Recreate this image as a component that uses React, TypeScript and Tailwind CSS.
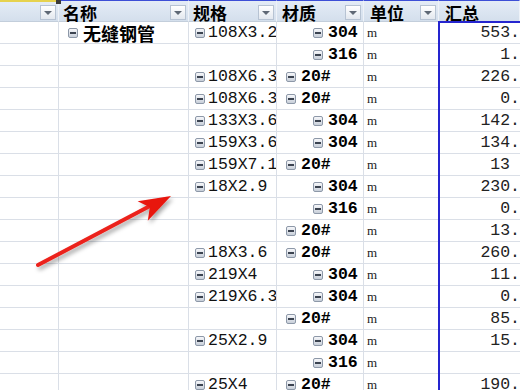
const COLS = ['w-[59px]', 'w-[130px]', 'w-[88px]', 'w-[87px]', 'w-[75px]', 'w-[81px]'];

type Row = {
  name?: string;
  spec?: string;
  mat?: string;
  sub?: boolean;
  total?: string;
  pr?: string;
};

const rows: Row[] = [
  { name: '无缝钢管', spec: '108X3.2', mat: '304', sub: true, total: '553.' },
  { mat: '316', sub: true, total: '1.' },
  { spec: '108X6.3', mat: '20#', total: '226.' },
  { spec: '108X6.3', mat: '20#', total: '0.' },
  { spec: '133X3.6', mat: '304', sub: true, total: '142.' },
  { spec: '159X3.6', mat: '304', sub: true, total: '134.' },
  { spec: '159X7.1', mat: '20#', total: '13', pr: 'pr-[10px]' },
  { spec: '18X2.9', mat: '304', sub: true, total: '230.' },
  { mat: '316', sub: true, total: '0.' },
  { mat: '20#', total: '13.' },
  { spec: '18X3.6', mat: '20#', total: '260.' },
  { spec: '219X4', mat: '304', sub: true, total: '11.' },
  { spec: '219X6.3', mat: '304', sub: true, total: '0.' },
  { mat: '20#', total: '85.' },
  { spec: '25X2.9', mat: '304', sub: true, total: '15.' },
  { mat: '316', sub: true, total: '' },
  { spec: '25X4', mat: '20#', total: '190.' },
];

const mono = { fontFamily: '"Liberation Mono", monospace' };
const cjk = { fontFamily: '"Noto Sans CJK SC", sans-serif' };

function Minus() {
  return (
    <span className="inline-flex w-[10px] h-[10px] shrink-0 items-center justify-center rounded-[2px] border border-[#8d98a8] bg-gradient-to-b from-[#f6f7fa] to-[#c8cfd9]">
      <span className="block w-[6px] h-[2px] bg-[#3b4350]" />
    </span>
  );
}

function DropBtn() {
  return (
    <span className="absolute right-[2px] bottom-[1px] flex w-[16px] h-[15px] items-center justify-center border border-[#b7c3d3] bg-gradient-to-b from-[#ffffff] to-[#e3e8ef]">
      <span className="block w-0 h-0 border-l-[4px] border-r-[4px] border-t-[4px] border-l-transparent border-r-transparent border-t-[#5f6875]" />
    </span>
  );
}

const headers = ['', '名称', '规格', '材质', '单位', '汇总'];
const headPad = ['', 'pl-[4px]', 'pl-[4px]', 'pl-[5px]', 'pl-[6px]', 'pl-[6px]'];

export default function App() {
  return (
    <div className="relative w-[520px] h-[390px] overflow-hidden bg-white">
      <div className="flex flex-col w-[520px]">
        <div className="flex h-[22px]">
          {headers.map((h, i) => (
            <div
              key={i}
              className={`relative ${COLS[i]} h-[22px] shrink-0 border-r border-b border-r-[#eef2f8] border-b-[#c3cedb] bg-gradient-to-b from-[#e4ecf6] to-[#d4dfec] ${i === 0 ? 'border-t-2 border-t-[#e6d24e]' : 'border-t border-t-[#3d4fd6]'} ${headPad[i]} pt-[3px] flex items-center`}
            >
              <span className="text-[17px] font-bold leading-[17px] text-black" style={cjk}>
                {h}
              </span>
              {i < 5 && <DropBtn />}
            </div>
          ))}
        </div>
        {rows.map((r, idx) => (
          <div key={idx} className="flex h-[22px]">
            <div className={`${COLS[0]} shrink-0 border-r border-b border-[#dadfe7]`} />
            <div className={`${COLS[1]} shrink-0 border-r border-b border-[#dadfe7] flex items-center gap-[5px] pl-[9px] whitespace-nowrap`}>
              {r.name && (
                <>
                  <Minus />
                  <span className="text-[18px] font-bold leading-[20px] text-black" style={cjk}>
                    {r.name}
                  </span>
                </>
              )}
            </div>
            <div className={`${COLS[2]} shrink-0 border-r border-b border-[#dadfe7] flex items-center gap-[3px] pl-[6px] overflow-x-clip whitespace-nowrap`}>
              {r.spec && (
                <>
                  <Minus />
                  <span className="text-[16.5px] leading-[20px] text-[#111]" style={mono}>
                    {r.spec}
                  </span>
                </>
              )}
            </div>
            <div
              className={`${COLS[3]} shrink-0 border-r border-b border-[#dadfe7] flex items-center gap-[5px] ${r.sub ? 'pl-[36px]' : 'pl-[9px]'} whitespace-nowrap`}
            >
              {r.mat && (
                <>
                  <Minus />
                  <span className="text-[16.5px] font-bold leading-[20px] text-black" style={mono}>
                    {r.mat}
                  </span>
                </>
              )}
            </div>
            <div className={`${COLS[4]} shrink-0 border-r border-b border-[#dadfe7] flex items-center pl-[3px]`}>
              <span className="text-[13px] leading-[16px] text-[#222]" style={{ fontFamily: '"Liberation Serif", serif' }}>
                m
              </span>
            </div>
            <div className={`${COLS[5]} shrink-0 border-b border-[#dadfe7] flex items-center justify-end whitespace-nowrap ${r.pr ?? ''}`}>
              <span className="text-[16.5px] leading-[20px] text-[#222]" style={mono}>
                {r.total}
              </span>
            </div>
          </div>
        ))}
      </div>

      {/* selection frame on 汇总 */}
      <div className="absolute left-[438px] top-[21px] w-[120px] h-[400px] border-l-2 border-t-2 border-[#2525cf]" />
      {/* fill handle */}
      <div className="absolute left-[56px] top-0 w-[5px] h-[4px] bg-[#3a3a3a]" />

      {/* red arrow */}
      <svg className="absolute left-0 top-0 pointer-events-none" width="520" height="390" viewBox="0 0 520 390">
        <defs>
          <filter id="sh" x="-20%" y="-20%" width="140%" height="140%">
            <feDropShadow dx="2" dy="3" stdDeviation="2" floodColor="#000" floodOpacity="0.35" />
          </filter>
          <linearGradient id="rg" x1="0" y1="0" x2="1" y2="1">
            <stop offset="0" stopColor="#ff3a2a" />
            <stop offset="1" stopColor="#d80c0c" />
          </linearGradient>
        </defs>
        <g filter="url(#sh)">
          <line x1="38" y1="265" x2="148" y2="207" stroke="url(#rg)" strokeWidth="4" strokeLinecap="round" />
          <polygon points="171,196 137.6,201.3 149.8,207.2 147.8,220.7" fill="#e8140f" />
        </g>
      </svg>
    </div>
  );
}
